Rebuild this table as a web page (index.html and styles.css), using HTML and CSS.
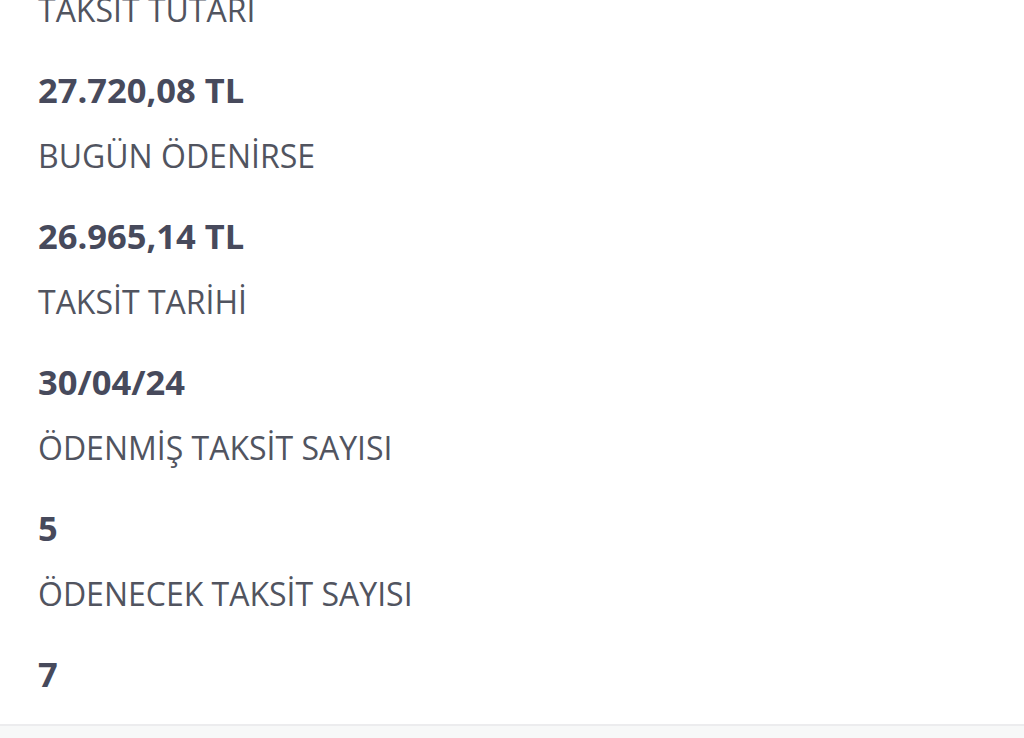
FILE: index.html
```html
<!DOCTYPE html>
<html lang="tr">
<head>
<meta charset="utf-8">
<link rel="stylesheet" href="styles.css">
</head>
<body>
<div class="page">
  <div class="content">
    <div class="list">
      <div class="item">
        <div class="label">TAKSİT TUTARI</div>
        <div class="value">27.720,08 TL</div>
      </div>
      <div class="item">
        <div class="label">BUGÜN ÖDENİRSE</div>
        <div class="value">26.965,14 TL</div>
      </div>
      <div class="item">
        <div class="label">TAKSİT TARİHİ</div>
        <div class="value">30/04/24</div>
      </div>
      <div class="item">
        <div class="label">ÖDENMİŞ TAKSİT SAYISI</div>
        <div class="value">5</div>
      </div>
      <div class="item">
        <div class="label">ÖDENECEK TAKSİT SAYISI</div>
        <div class="value">7</div>
      </div>
    </div>
  </div>
  <div class="footer"></div>
</div>
</body>
</html>
```
FILE: styles.css
```css
html, body {
  margin: 0;
  padding: 0;
  background: #ffffff;
}
.page {
  width: 1024px;
  height: 738px;
  display: flex;
  flex-direction: column;
  overflow: hidden;
  font-family: "Open Sans", "Noto Sans", sans-serif;
}
.content {
  height: 726px;
  flex-shrink: 0;
  overflow: hidden;
  border-bottom: 2px solid #ececee;
  box-sizing: border-box;
}
.list {
  margin-top: -10px;
  padding-left: 38px;
  display: flex;
  flex-direction: column;
  gap: 26px;
}
.item {
  display: flex;
  flex-direction: column;
  gap: 40px;
}
.label {
  font-size: 32px;
  line-height: 40px;
  color: #51545f;
  font-weight: 400;
}
.value {
  font-size: 34.5px;
  line-height: 40px;
  color: #474a5c;
  font-weight: 700;
}
.footer {
  flex: 1;
  background: #f7f8f8;
}
```
